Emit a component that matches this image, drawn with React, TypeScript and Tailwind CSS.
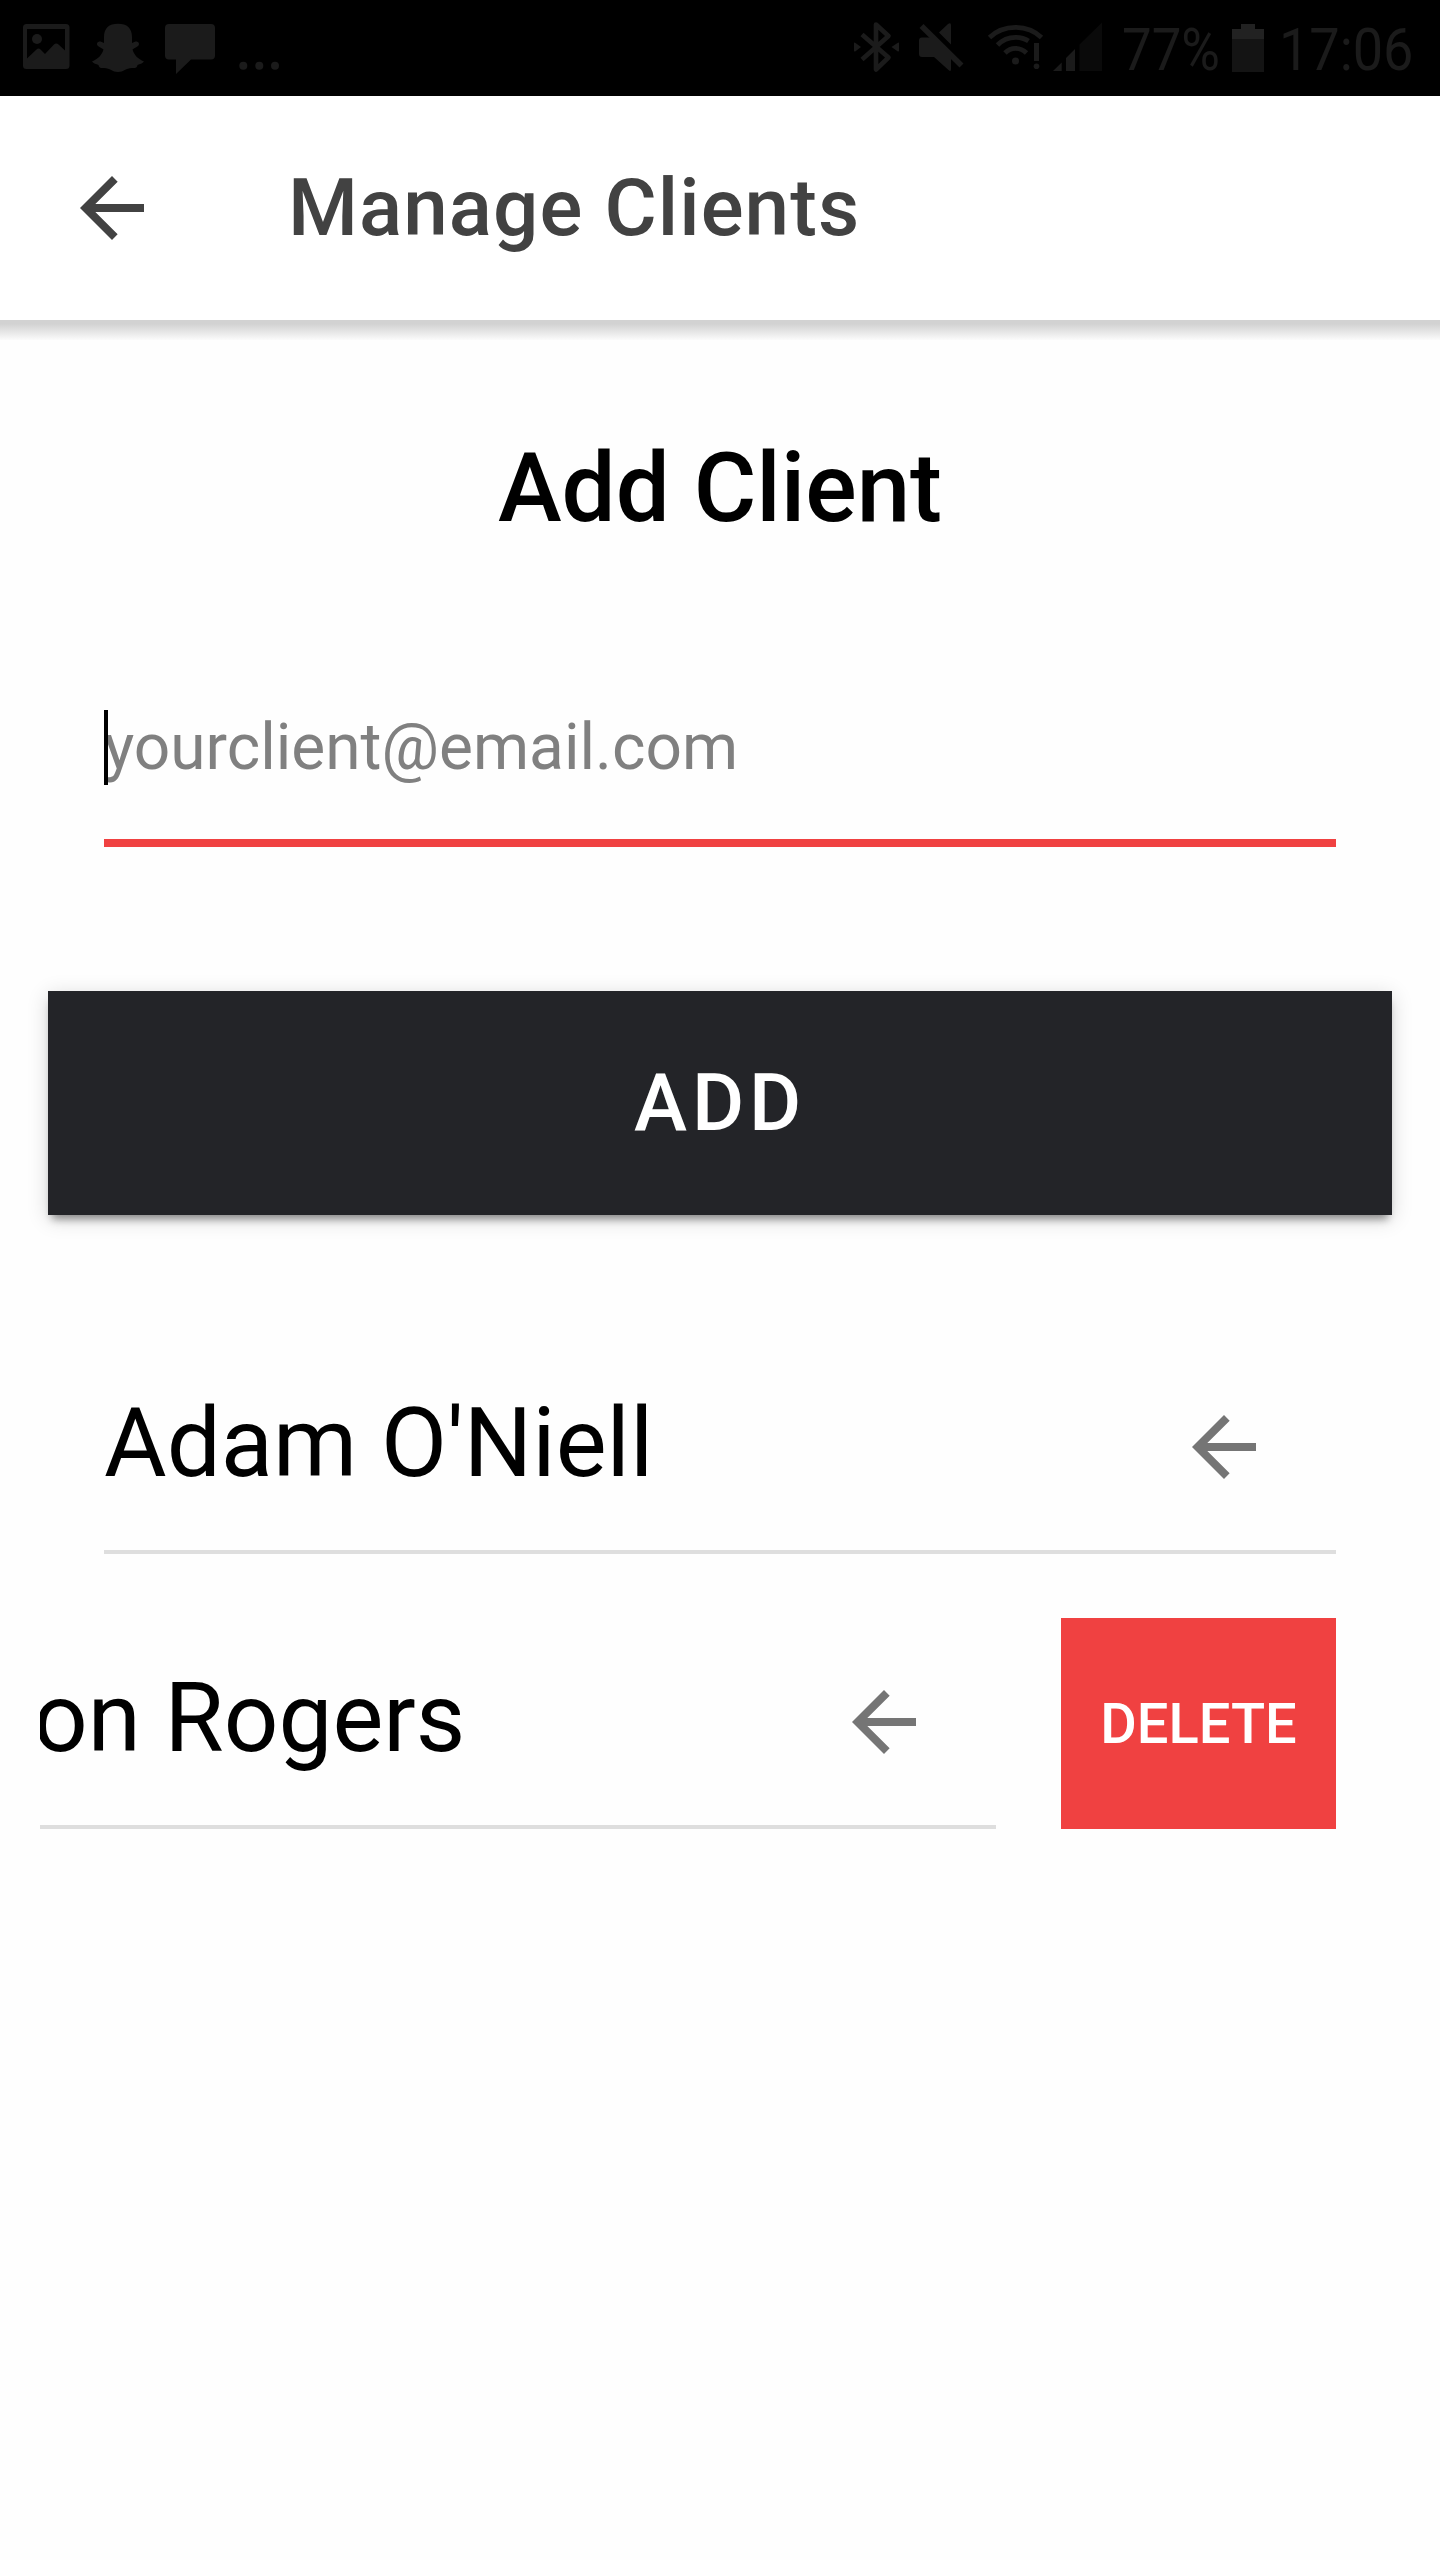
import React from "react";

function ArrowBack({ className }: { className: string }) {
  return (
    <svg viewBox="0 0 24 24" fill="currentColor" className={`h-24 w-24 shrink-0 ${className}`}>
      <path d="M20 11H7.83l5.59-5.59L12 4l-8 8 8 8 1.41-1.41L7.83 13H20v-2z" />
    </svg>
  );
}

function NotificationIcons() {
  return (
    <svg viewBox="0 0 300 96" className="h-24 w-[300px] fill-[#1b1b1b]">
      <path
        fillRule="evenodd"
        d="M26.500 24H66Q69.500 24 69.500 27.500V65.500Q69.500 69 66 69H26.500Q23 69 23 65.500V27.500Q23 24 26.500 24ZM27 29V58.500L36.500 49.500Q38.500 47.500 40.500 49.500L45 54L54 44.500Q56.200 42.500 58.500 44.500L65 50.500V29Z"
      />
      <circle cx="37" cy="39" r="5" />
      <path d="M104 43V37C104 28 109 23.700 118 23.700S132 28 132 37V43L135.500 41.500C138 41 140 43.500 138.500 45.500C137.500 47 134 48 132.500 49.500C134 55 138 59 144 61.500C142.500 63.500 140 64 137.500 65C137 67.500 136 68 133 68C126 67.500 124 72 118 72S110 67.500 103 68C100 68 99 67.500 98.500 65C96 64 93.500 63.500 92 61.500C98 59 102 55 103.500 49.500C102 48 98.500 47 97.500 45.500C96 43.500 98 41 100.500 41.500Z" />
      <path d="M169 24H211Q215 24 215 28V55.500Q215 59.500 211 59.500H191L176 74V59.500H169Q165 59.500 165 55.500V28Q165 24 169 24Z" />
      <circle cx="243.300" cy="65.700" r="4" />
      <circle cx="259.300" cy="65.700" r="4" />
      <circle cx="275" cy="65.700" r="4" />
    </svg>
  );
}

function SystemIcons() {
  return (
    <svg viewBox="0 0 264 96" className="h-24 w-[264px] fill-[#1b1b1b]">
      <path
        d="M22 34.500L48.500 57.500L36 69.500V24.500L48.500 36L22 59.500"
        fill="none"
        stroke="#1b1b1b"
        strokeWidth="4.600"
        strokeLinejoin="round"
      />
      <path d="M14 43.500Q14 42 15.500 43L21 47L15.500 51.200Q14 52 14 50.500ZM59 43.500Q59 42 57.500 43L51.500 47L57.500 51.200Q59 52 59 50.500Z" />
      <path d="M99 32.500L108 24Q111 22 111 25V44.500ZM82 37.500H91L111 57V69Q111 72.500 108.500 70L94 57H82Q79 57 79 54V40.500Q79 37.500 82 37.500Z" />
      <path d="M81.500 26L121.500 65.500" stroke="#1b1b1b" strokeWidth="5.600" />
      <g fill="none" stroke="#1b1b1b" strokeWidth="4.800">
        <path d="M149.500 37.500Q160 27.300 175.500 27.300T201.500 37.500" />
        <path d="M157.500 45Q165 37.300 175.500 37.300Q183 37.300 188.500 41" />
        <path d="M165 53Q169.500 48.300 175.500 48.300T186.500 53" />
      </g>
      <circle cx="175.500" cy="61" r="3.500" />
      <path d="M194 43H199V61H194Z" />
      <circle cx="196.500" cy="66.300" r="2.800" />
      <path d="M213 71L221.700 62.500V71ZM226 58L235 49V71H226Z" />
      <path d="M239.500 44.500L262 22.500V71H239.500Z" fill="#0a0a0a" />
    </svg>
  );
}

function StatusBar() {
  return (
    <div className="flex h-24 items-center bg-black text-[60px] leading-[96px] text-[#1b1b1b]">
      <NotificationIcons />
      <div className="ml-[540px] flex items-center">
        <SystemIcons />
        <span className="ml-[18px] w-[98px] origin-left scale-x-[0.88] pt-[3px]">77%</span>
        <svg viewBox="0 0 32 48" className="ml-[12px] h-12 w-8">
          <path d="M9 0H23V5H32V15H0V5H9Z" fill="#222222" />
          <path d="M0 15H32V48H0Z" fill="#141414" />
        </svg>
        <span className="ml-[15px] origin-left scale-x-[0.9] pt-[3px]">17:06</span>
      </div>
    </div>
  );
}

export default function App() {
  return (
    <div className="h-[2560px] w-[1440px] overflow-hidden bg-[#fefefe] font-['Roboto',sans-serif] text-black">
      <StatusBar />
      <header className="relative flex h-56 items-center bg-white pl-16 text-[#424242]">
        <ArrowBack className="" />
        <h1 className="ml-32 text-[80px] font-medium leading-none tracking-[0.0135em]">Manage Clients</h1>
        <div className="absolute inset-x-0 top-full h-5 bg-linear-to-b from-[#d2d2d2] from-20% to-[#fbfbfb]" />
      </header>

      <main className="flex flex-col pt-28">
        <h2 className="text-center text-[96px] font-medium leading-[112px]">Add Client</h2>

        <div className="mx-[104px] mt-[166px] flex h-[137px] items-start border-b-8 border-[#f04141]">
          <span className="z-10 h-[75px] w-1 bg-black" />
          <span className="-ml-1 text-[64px] leading-[75px] text-[#808080]">yourclient@email.com</span>
        </div>

        <button className="mx-12 mt-36 h-56 bg-[#232428] text-[80px] font-medium leading-none tracking-[0.06em] text-white shadow-[0_8px_8px_-4px_rgba(0,0,0,0.4),0_4px_20px_rgba(0,0,0,0.16)]">
          ADD
        </button>

        <ul className="mt-32 flex flex-col gap-16">
          <li className="mx-[104px] flex h-[211px] items-center justify-between border-b-4 border-[#dedede] pr-16">
            <span className="-mt-2 text-[96px] leading-none">Adam O'Niell</span>
            <ArrowBack className="text-[#757575]" />
          </li>
          <li className="mr-[104px] ml-10 flex h-[211px] justify-between">
            <div className="flex w-[956px] items-center justify-between overflow-hidden border-b-4 border-[#dedede] pr-16">
              <span className="-mt-2 -ml-[7px] text-[96px] leading-[120px]">on Rogers</span>
              <ArrowBack className="text-[#757575]" />
            </div>
            <button className="w-[275px] bg-[#f04141] text-[56px] font-medium leading-none text-white">DELETE</button>
          </li>
        </ul>
      </main>
    </div>
  );
}
